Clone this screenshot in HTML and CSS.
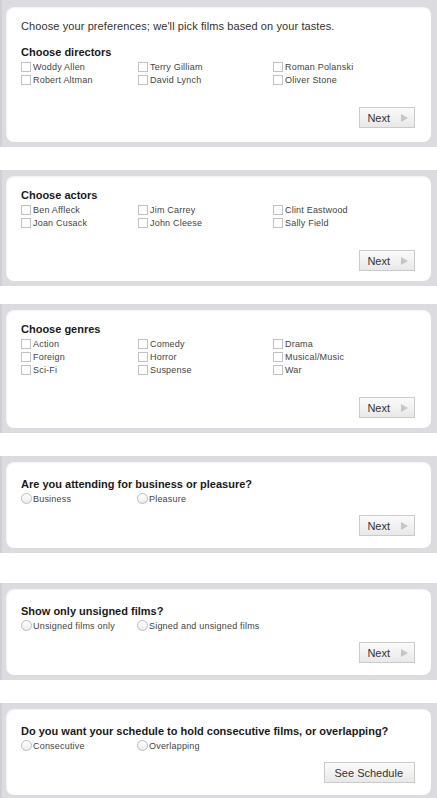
FILE: index.html
```html
<!DOCTYPE html>
<html lang="en">
<head>
  <meta charset="UTF-8" />
  <meta name="viewport" content="width=device-width, initial-scale=1.0"/>
  <title>Film preferences</title>
  <link rel="stylesheet" href="styles.css">
</head>
<body>
  <div class="step step-first">
    <div class="card">
      <p class="intro">Choose your preferences; we'll pick films based on your tastes.</p>
      <h2>Choose directors</h2>
      <div class="options">
        <label><input type="checkbox">Woddy Allen</label>
        <label><input type="checkbox">Terry Gilliam</label>
        <label><input type="checkbox">Roman Polanski</label>
        <label><input type="checkbox">Robert Altman</label>
        <label><input type="checkbox">David Lynch</label>
        <label><input type="checkbox">Oliver Stone</label>
      </div>
      <div class="actions"><button class="btn">Next<span class="arrow"></span></button></div>
    </div>
  </div>

  <div class="step gap-sm">
    <div class="card">
      <h2>Choose actors</h2>
      <div class="options">
        <label><input type="checkbox">Ben Affleck</label>
        <label><input type="checkbox">Jim Carrey</label>
        <label><input type="checkbox">Clint Eastwood</label>
        <label><input type="checkbox">Joan Cusack</label>
        <label><input type="checkbox">John Cleese</label>
        <label><input type="checkbox">Sally Field</label>
      </div>
      <div class="actions"><button class="btn">Next<span class="arrow"></span></button></div>
    </div>
  </div>

  <div class="step">
    <div class="card">
      <h2>Choose genres</h2>
      <div class="options">
        <label><input type="checkbox">Action</label>
        <label><input type="checkbox">Comedy</label>
        <label><input type="checkbox">Drama</label>
        <label><input type="checkbox">Foreign</label>
        <label><input type="checkbox">Horror</label>
        <label><input type="checkbox">Musical/Music</label>
        <label><input type="checkbox">Sci-Fi</label>
        <label><input type="checkbox">Suspense</label>
        <label><input type="checkbox">War</label>
      </div>
      <div class="actions"><button class="btn">Next<span class="arrow"></span></button></div>
    </div>
  </div>

  <div class="step gap-lg">
    <div class="card card-radio">
      <h2>Are you attending for business or pleasure?</h2>
      <div class="options radios">
        <label><input type="radio" name="purpose">Business</label>
        <label><input type="radio" name="purpose">Pleasure</label>
      </div>
      <div class="actions"><button class="btn">Next<span class="arrow"></span></button></div>
    </div>
  </div>

  <div class="step">
    <div class="card card-radio">
      <h2>Show only unsigned films?</h2>
      <div class="options radios">
        <label><input type="radio" name="signed">Unsigned films only</label>
        <label><input type="radio" name="signed">Signed and unsigned films</label>
      </div>
      <div class="actions"><button class="btn">Next<span class="arrow"></span></button></div>
    </div>
  </div>

  <div class="step">
    <div class="card card-radio">
      <h2>Do you want your schedule to hold consecutive films, or overlapping?</h2>
      <div class="options radios">
        <label><input type="radio" name="schedule">Consecutive</label>
        <label><input type="radio" name="schedule">Overlapping</label>
      </div>
      <div class="actions"><button class="btn btn-wide">See Schedule</button></div>
    </div>
  </div>
</body>
</html>
```

FILE: styles.css
```css
body {
  margin: 0;
  font-family: "Liberation Sans", Arial, sans-serif;
  background-color: #fff;
  color: #333;
}
.step {
  background-color: #dcdce0;
  border-left: 2px solid #cfcfd4;
  padding: 6px 6px 5px 4px;
  margin-bottom: 23px;
}
.step-first {
  padding-top: 7px;
}
.gap-sm {
  margin-bottom: 18px;
}
.gap-lg {
  margin-bottom: 30px;
}
.card {
  background-color: #fff;
  border-radius: 8px;
  padding: 13px 16px 10px 15px;
  box-shadow: inset 1px 1px 2px rgba(0, 0, 0, 0.06);
}
.step-first .card {
  padding-top: 13px;
  padding-bottom: 14px;
}
.card-radio {
  padding-top: 16px;
  padding-bottom: 12px;
}
.intro {
  margin: 0 0 13px;
  font-size: 11px;
  line-height: 13px;
  letter-spacing: 0.1px;
  color: #333;
}
h2 {
  margin: 0 0 1px;
  font-size: 11px;
  line-height: 13px;
  font-weight: bold;
  color: #1a1a1a;
}
.options {
  display: grid;
  grid-template-columns: 117px 135px 1fr;
  grid-auto-rows: 13px;
}
.options label {
  display: flex;
  align-items: center;
  font-size: 9px;
  letter-spacing: 0.2px;
  color: #444;
  white-space: nowrap;
}
.options input[type="checkbox"] {
  appearance: none;
  width: 10px;
  height: 10px;
  margin: 0 2px 0 0;
  border: 1px solid #c2c2c2;
  background-color: #fff;
}
.radios {
  grid-template-columns: 116px 1fr;
}
.options input[type="radio"] {
  appearance: none;
  width: 11px;
  height: 11px;
  margin: 0 1px 0 0;
  border: 1px solid #bcbcbc;
  border-radius: 50%;
  background: linear-gradient(#fff, #ececec);
}
.actions {
  display: flex;
  justify-content: flex-end;
  margin-top: 21px;
}
.card-radio .actions {
  margin-top: 10px;
}
.btn {
  display: flex;
  align-items: center;
  height: 21px;
  padding: 0 6px 0 7px;
  font-family: "Liberation Sans", Arial, sans-serif;
  font-size: 11px;
  color: #333;
  background: linear-gradient(#fbfbfb, #e8e8e8);
  border: 1px solid #cbcbcb;
  border-radius: 0;
}
.btn-wide {
  padding: 0 11px 0 10px;
}
.arrow {
  width: 0;
  height: 0;
  margin-left: 11px;
  border-left: 7px solid #c6c6c6;
  border-top: 4px solid transparent;
  border-bottom: 4px solid transparent;
}
```
